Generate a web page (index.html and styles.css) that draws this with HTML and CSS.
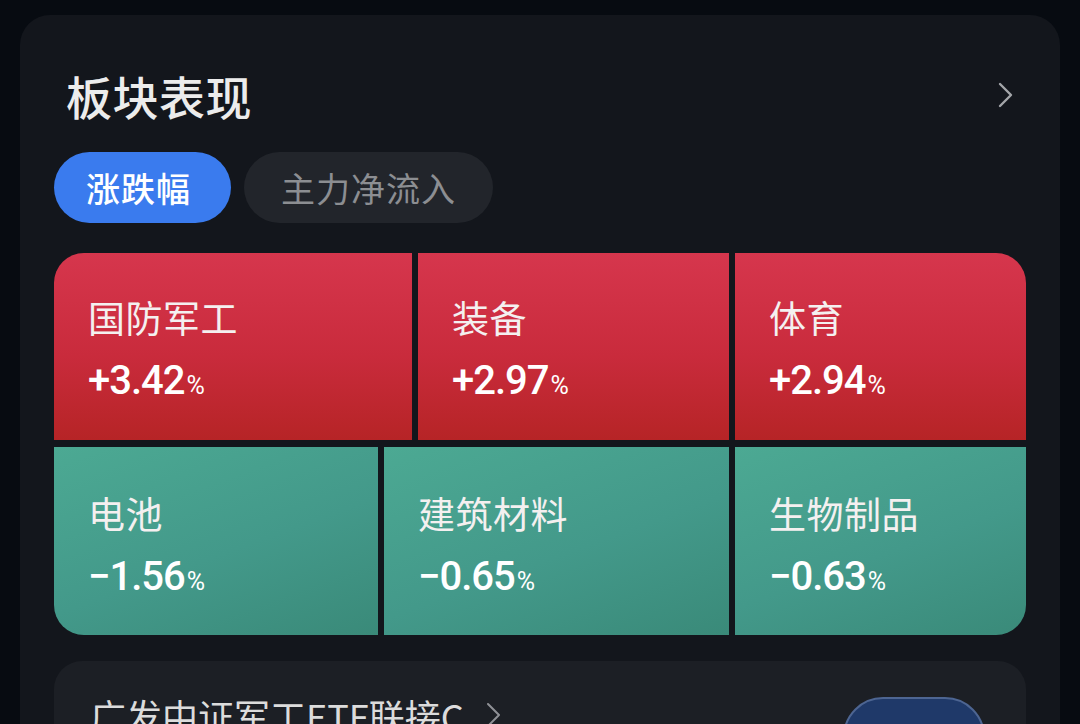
FILE: index.html
```html
<!DOCTYPE html>
<html lang="zh-CN">
<head>
<meta charset="utf-8">
<title>板块表现</title>
<link rel="stylesheet" href="styles.css">
</head>
<body>
<div class="card">
  <div class="header">
    <h1 class="title">板块表现</h1>
    <svg class="chev" width="16" height="26" viewBox="0 0 16 26"><path d="M2 2 L13 13 L2 24" fill="none" stroke="#a3a5a9" stroke-width="2.4" stroke-linecap="round" stroke-linejoin="round"/></svg>
  </div>
  <div class="tabs">
    <div class="tab active">涨跌幅</div>
    <div class="tab">主力净流入</div>
  </div>
  <div class="grid">
    <div class="row row-top">
      <div class="tile up tl"><div class="name">国防军工</div><div class="pct">+3.42<span class="unit">%</span></div></div>
      <div class="tile up"><div class="name">装备</div><div class="pct">+2.97<span class="unit">%</span></div></div>
      <div class="tile up tr"><div class="name">体育</div><div class="pct">+2.94<span class="unit">%</span></div></div>
    </div>
    <div class="row row-bottom">
      <div class="tile down bl"><div class="name">电池</div><div class="pct">−1.56<span class="unit">%</span></div></div>
      <div class="tile down"><div class="name">建筑材料</div><div class="pct">−0.65<span class="unit">%</span></div></div>
      <div class="tile down br"><div class="name">生物制品</div><div class="pct">−0.63<span class="unit">%</span></div></div>
    </div>
  </div>
  <div class="fund">
    <div class="fund-name">广发中证军工ETF联接C
      <svg class="fund-chev" width="16" height="26" viewBox="0 0 16 26"><path d="M2 2 L13 13 L2 24" fill="none" stroke="#8f9196" stroke-width="2" stroke-linecap="round" stroke-linejoin="round"/></svg>
    </div>
    <div class="buy">买入</div>
  </div>
</div>
</body>
</html>
```
FILE: styles.css
```css
html, body {
  margin: 0;
  padding: 0;
  background: #070b11;
  height: 724px;
  overflow: hidden;
}
body {
  font-family: "Noto Sans CJK SC", "Noto Sans", sans-serif;
  color: #ececec;
}
.card {
  margin: 15px 20px 0;
  height: 760px;
  background: #13161c;
  border-radius: 30px;
  padding: 50px 34px 0;
  box-sizing: border-box;
}
.header {
  display: flex;
  align-items: center;
  justify-content: space-between;
  height: 60px;
  padding-left: 12px;
  padding-right: 12px;
}
.title {
  margin: 0;
  font-size: 46px;
  font-weight: 500;
  line-height: 60px;
  color: #ececec;
  letter-spacing: 0.5px;
}
.chev {
  display: block;
}
.tabs {
  display: flex;
  gap: 13px;
  margin-top: 27px;
}
.tab {
  height: 71px;
  border-radius: 36px;
  display: flex;
  align-items: center;
  justify-content: center;
  font-size: 34px;
  color: #8c8e92;
  background: #22252b;
  letter-spacing: 1px;
  width: 249px;
}
.tab.active {
  background: #3a7bee;
  color: #ffffff;
  font-weight: 500;
  width: 177px;
  padding-right: 8px;
  box-sizing: border-box;
}
.grid {
  margin-top: 30px;
  display: flex;
  flex-direction: column;
  gap: 7px;
}
.row {
  display: grid;
  gap: 6px;
}
.row-top {
  grid-template-columns: 358px 311px 1fr;
  height: 187px;
}
.row-bottom {
  grid-template-columns: 324px 345px 1fr;
  height: 188px;
}
.tile {
  padding: 42px 0 0 34px;
  box-sizing: border-box;
  color: #ffffff;
}
.up {
  background: linear-gradient(180deg, #d6364d 0%, #c92b3c 55%, #b62426 100%);
}
.down {
  background: linear-gradient(160deg, #4ca993 0%, #43998a 55%, #3a8a79 100%);
}
.tl { border-top-left-radius: 30px; }
.tr { border-top-right-radius: 30px; }
.bl { border-bottom-left-radius: 30px; }
.br { border-bottom-right-radius: 30px; }
.name {
  font-size: 37px;
  line-height: 44px;
  color: #f4f0f0;
  letter-spacing: 0.5px;
}
.row-bottom .tile {
  padding-top: 44px;
}
.pct {
  margin-top: 18px;
  font-family: "Roboto", "Noto Sans", sans-serif;
  font-size: 40px;
  line-height: 48px;
  font-weight: 500;
  color: #ffffff;
  letter-spacing: -1px;
}
.unit {
  font-size: 25px;
  font-weight: 400;
  margin-left: 2px;
  letter-spacing: 0;
}
.fund {
  margin-top: 26px;
  height: 120px;
  background: #1c1f25;
  border-radius: 28px;
  display: flex;
  justify-content: space-between;
  align-items: flex-start;
  padding: 30px 41px 0 36px;
}
.fund-name {
  display: flex;
  align-items: center;
  gap: 22px;
  font-size: 36px;
  line-height: 48px;
  color: #dcdcdc;
}
.fund-chev {
  display: block;
}
.buy {
  margin-top: 6px;
  width: 142px;
  height: 80px;
  box-sizing: border-box;
  border: 2px solid #4d6592;
  background: #1f3969;
  border-radius: 40px;
  color: #ffffff;
  font-size: 33px;
  display: flex;
  justify-content: center;
  padding-top: 14px;
}
```
